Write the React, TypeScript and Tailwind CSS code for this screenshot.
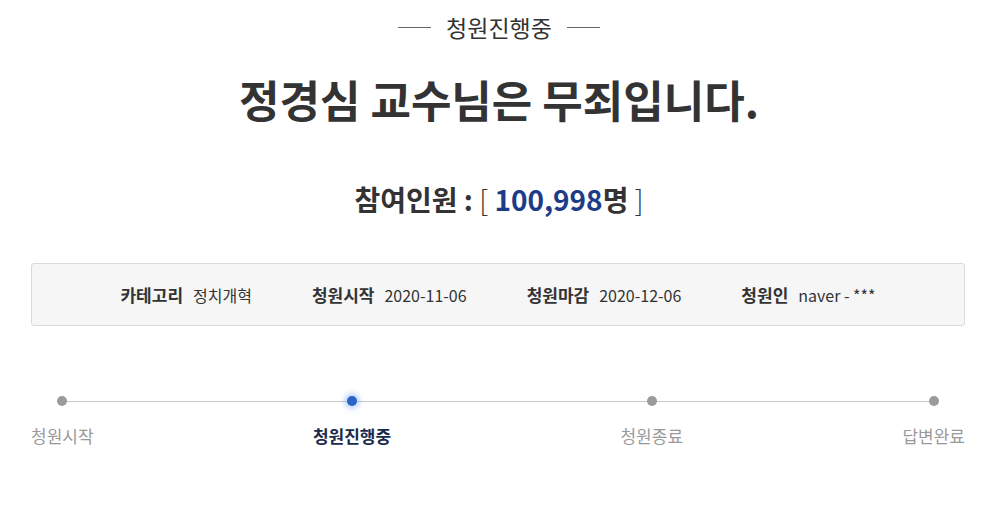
import React from 'react';

const info = [
  { label: '카테고리', value: '정치개혁' },
  { label: '청원시작', value: '2020-11-06' },
  { label: '청원마감', value: '2020-12-06' },
  { label: '청원인', value: 'naver - ***' },
];

const steps = [
  { label: '청원시작', active: false },
  { label: '청원진행중', active: true },
  { label: '청원종료', active: false },
  { label: '답변완료', active: false },
];

export default function App() {
  return (
    <div className="w-[998px] h-[518px] bg-white text-[#333] font-['Noto_Sans_CJK_KR','Noto_Sans',sans-serif] overflow-hidden">
      {/* status header */}
      <div className="pt-[11px] flex items-center justify-center gap-[15px]">
        <span className="w-[33px] h-px bg-[#666]" />
        <span className="text-[23px] leading-[32px] text-[#333]">청원진행중</span>
        <span className="w-[33px] h-px bg-[#666]" />
      </div>

      <h1 className="mt-[26px] text-center text-[44px] leading-[60px] font-bold text-[#333]">
        정경심 교수님은 무죄입니다.
      </h1>

      <p className="mt-[49px] text-center text-[28px] leading-[42px] font-bold text-[#333]">
        참여인원 : <span className="font-light">[</span>{' '}
        <span className="text-[#1d3c87]">100,998</span>명{' '}
        <span className="font-light">]</span>
      </p>

      <div className="ml-[31px] mr-[33px] mt-[43px] h-[63px] border border-[#dadada] rounded-[3px] bg-[#f6f6f6] flex items-center justify-center gap-[60px]">
        {info.map((item) => (
          <div key={item.label} className="flex items-center gap-[10px] leading-[24px]">
            <span className="font-bold text-[17px] text-[#333]">{item.label}</span>
            <span className="text-[16px] text-[#333]">{item.value}</span>
          </div>
        ))}
      </div>

      {/* progress */}
      <div className="relative ml-[31px] mr-[33px] mt-[70px] flex justify-between">
        <div className="absolute left-[31px] right-[31px] top-[5px] h-px bg-[#c8c8c8]" />
        {steps.map((s) => (
          <div key={s.label} className={s.active ? 'relative flex flex-col items-center mr-[10px]' : 'relative flex flex-col items-center'}>
            {s.active ? (
              <span className="w-[10px] h-[10px] rounded-full bg-[#2b63c6] shadow-[0_0_5px_3px_rgba(80,140,240,0.35)]" />
            ) : (
              <span className="w-[10px] h-[10px] rounded-full bg-[#9b9b9b]" />
            )}
            <span
              className={
                s.active
                  ? 'mt-[17px] text-[17px] leading-[26px] font-bold text-[#1c2b4b]'
                  : 'mt-[17px] text-[17px] leading-[26px] text-[#9a9a9a]'
              }
            >
              {s.label}
            </span>
          </div>
        ))}
      </div>
    </div>
  );
}
